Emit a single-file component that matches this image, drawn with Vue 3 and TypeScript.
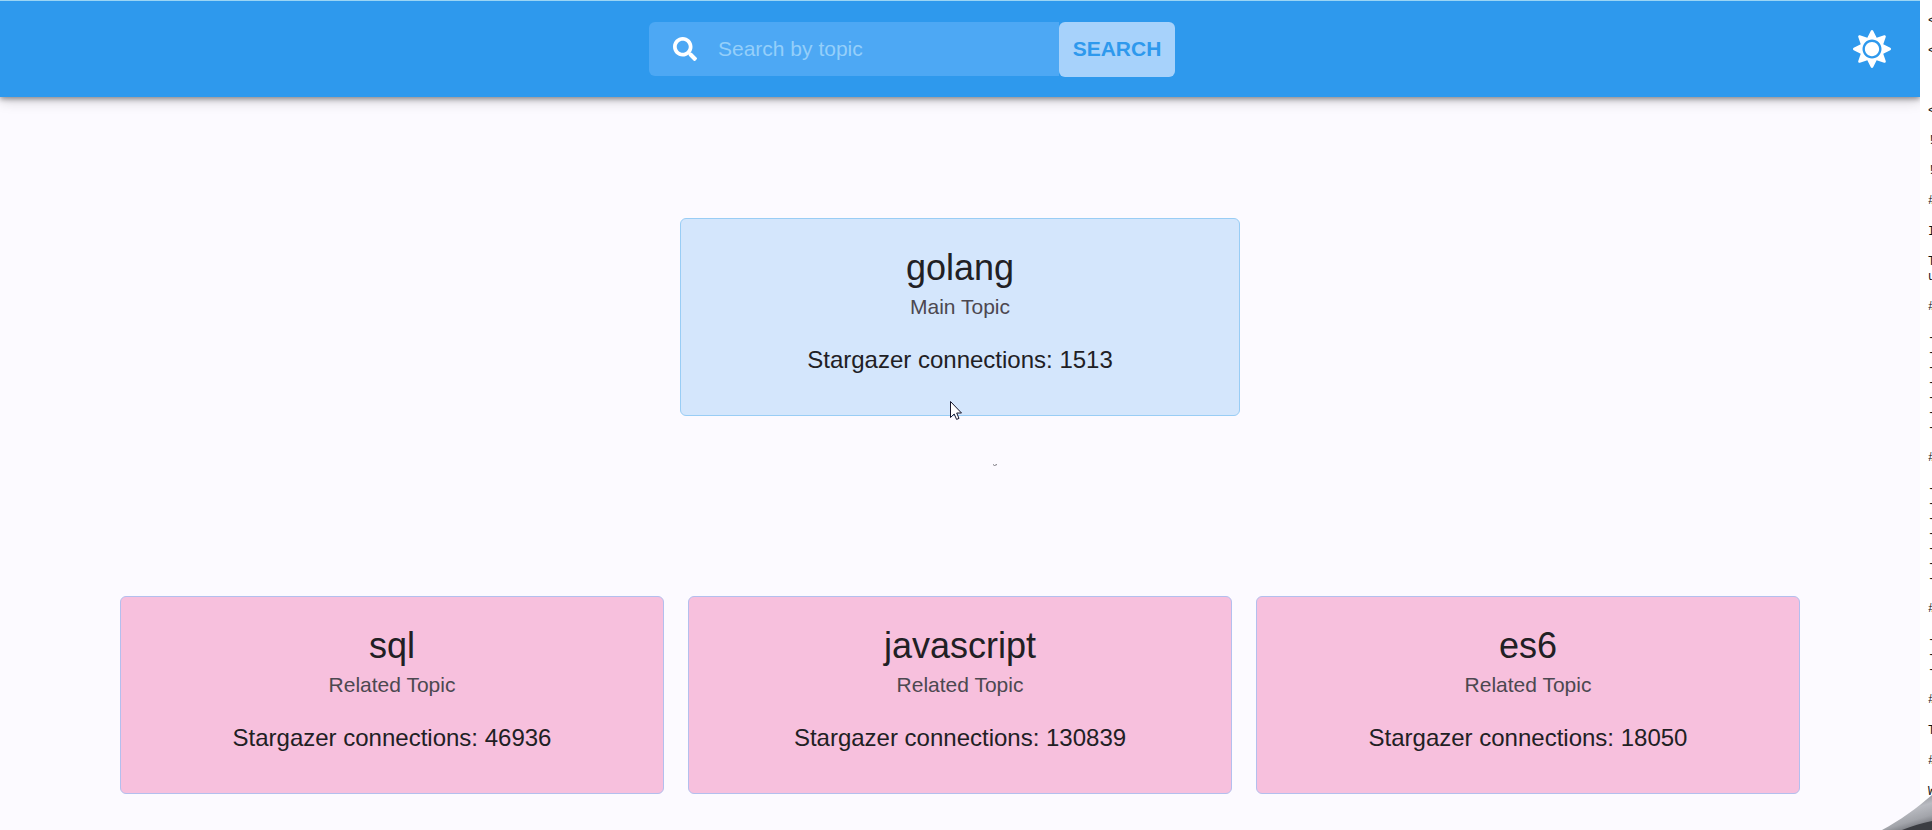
<script setup lang="ts">
import { ref } from 'vue'

interface Topic {
  name: string
  kind: string
  connections: number
}

const query = ref('')
const mainTopic: Topic = { name: 'golang', kind: 'Main Topic', connections: 1513 }
const relatedTopics: Topic[] = [
  { name: 'sql', kind: 'Related Topic', connections: 46936 },
  { name: 'javascript', kind: 'Related Topic', connections: 130839 },
  { name: 'es6', kind: 'Related Topic', connections: 18050 },
]

// First column of the text window that sits behind the app; '' is a blank line.
const notes: string[] = [
  '<', '', '<', '', '', '', '<', '', '!', '', '!', '', '#', '', 'I', '', 'T', 'u', '', '#', '',
  '-', '-', '-', '-', '-', '-', '-', '', '#', '',
  '-', '-', '-', '-', '-', '-', '-', '', '#', '',
  '-', '-', '-', '', '#', '', 'T', '', '#', '', 'W',
]
</script>

<template>
  <div class="desktop">
    <div class="app">
      <header class="bar">
        <form class="search" @submit.prevent>
          <label class="field">
            <svg class="search-icon" viewBox="0 0 512 512" role="img" aria-label="Topic">
              <path d="M505 442.7L405.3 343c-4.5-4.5-10.6-7-17-7H372c27.6-35.3 44-79.7 44-128C416 93.1 322.9 0 208 0S0 93.1 0 208s93.1 208 208 208c48.3 0 92.7-16.4 128-44v16.3c0 6.4 2.5 12.5 7 17l99.7 99.7c9.4 9.4 24.6 9.4 33.9 0l28.3-28.3c9.4-9.4 9.4-24.6.1-34zM208 336c-70.7 0-128-57.2-128-128 0-70.7 57.2-128 128-128 70.7 0 128 57.2 128 128 0 70.7-57.2 128-128 128z" />
            </svg>
            <input v-model="query" class="query" type="text" placeholder="Search by topic" />
          </label>
          <button class="submit" type="submit">SEARCH</button>
        </form>
        <button class="theme" type="button" aria-label="Toggle theme">
          <svg viewBox="0 0 512 512" aria-hidden="true">
            <path d="M256 160c-52.9 0-96 43.1-96 96s43.1 96 96 96 96-43.1 96-96-43.1-96-96-96zm246.4 80.5l-94.7-47.3 33.5-100.4c4.5-13.6-8.4-26.5-21.9-21.9l-100.4 33.5-47.4-94.8c-6.4-12.8-24.6-12.8-31 0l-47.3 94.7L92.7 70.8c-13.6-4.5-26.5 8.4-21.9 21.9l33.5 100.4-94.7 47.4c-12.8 6.4-12.8 24.6 0 31l94.7 47.3-33.5 100.5c-4.5 13.6 8.4 26.5 21.9 21.9l100.4-33.5 47.3 94.7c6.4 12.8 24.6 12.8 31 0l47.3-94.7 100.4 33.5c13.6 4.5 26.5-8.4 21.9-21.9l-33.5-100.4 94.7-47.3c13-6.5 13-24.7.2-31.1zm-155.9 106c-49.9 49.9-131.1 49.9-181 0-49.9-49.9-49.9-131.1 0-181 49.9-49.9 131.1-49.9 181 0 49.9 49.9 49.9 131.1 0 181z" />
          </svg>
        </button>
      </header>

      <main class="topics">
        <article class="card main-card">
          <h1 class="name">{{ mainTopic.name }}</h1>
          <p class="kind">{{ mainTopic.kind }}</p>
          <p class="count">Stargazer connections: {{ mainTopic.connections }}</p>
          <svg class="pointer" viewBox="0 0 12 19" aria-hidden="true">
            <path d="M.5 .5V16.5L4.2 13L6.6 18.4L9 17.4L6.7 12H11.5Z" />
          </svg>
          <svg class="speck" viewBox="0 0 4 2" aria-hidden="true">
            <path d="M0 .5L1.5 1.5L4 .5" />
          </svg>
        </article>
        <section class="related" aria-label="Related topics">
          <article v-for="topic in relatedTopics" :key="topic.name" class="card">
            <h2 class="name">{{ topic.name }}</h2>
            <p class="kind">{{ topic.kind }}</p>
            <p class="count">Stargazer connections: {{ topic.connections }}</p>
          </article>
        </section>
      </main>
    </div>

    <aside class="notes">
      <div v-for="(line, i) in notes" :key="i" class="line" :class="{ heading: line === '#' }">{{ line }}</div>
    </aside>

    <svg class="curl" viewBox="0 0 50 36" aria-hidden="true">
      <defs>
        <linearGradient id="curl-fill" x1="0.3" y1="0.2" x2="0.65" y2="1">
          <stop offset="0" stop-color="#8f9197" />
          <stop offset="0.35" stop-color="#b9bbc1" />
          <stop offset="0.7" stop-color="#a2a4aa" />
          <stop offset="1" stop-color="#6e7076" />
        </linearGradient>
      </defs>
      <path d="M0 36C17 27 35 14 50 1V36Z" fill="url(#curl-fill)" />
      <path d="M20 36C30 32 40 29 50 27V36Z" fill="#3b3d42" />
    </svg>
  </div>
</template>

<style>
body {
  background: #fff;
}
</style>

<style scoped>
.desktop {
  position: relative;
  display: grid;
  grid-template-columns: minmax(0, 1fr) 12px;
  min-height: 100vh;
  overflow: hidden;
  font-family: "Liberation Sans", Arial, sans-serif;
}

.app {
  background: #fcfaff;
}

.bar {
  display: grid;
  grid-template-columns: 1fr auto 1fr;
  align-items: start;
  box-sizing: border-box;
  height: 97px;
  padding: 21px 24px 0;
  border-top: 1px solid #9bd5f4;
  background: #2e99ed;
  box-shadow: 0 2px 5px rgba(0, 0, 0, 0.36), 0 4px 12px rgba(0, 0, 0, 0.18);
}

.search {
  grid-column: 2;
  display: flex;
  align-items: flex-start;
  margin-right: 96px;
}

.field {
  display: flex;
  align-items: center;
  box-sizing: border-box;
  width: 410px;
  height: 54px;
  padding-left: 24px;
  gap: 21px;
  border-radius: 6px 0 0 6px;
  background: #4da8f4;
}

.search-icon {
  flex: none;
  width: 24px;
  height: 24px;
  fill: #fff;
}

.query {
  flex: 1;
  min-width: 0;
  padding: 0;
  border: 0;
  outline: 0;
  background: transparent;
  color: #fff;
  font: 21px/30px "Liberation Sans", Arial, sans-serif;
}

.query::placeholder {
  color: #94cffa;
  opacity: 1;
}

.submit {
  width: 116px;
  height: 55px;
  padding: 0 0 2px;
  border: 0;
  border-radius: 6px;
  background: #a7d2fb;
  color: #2e99ed;
  font: bold 21px/36px "Liberation Sans", Arial, sans-serif;
}

.theme {
  grid-column: 3;
  justify-self: end;
  display: flex;
  margin: 8px 5px 0 0;
  padding: 0;
  border: 0;
  background: none;
}

.theme svg {
  width: 38px;
  height: 38px;
  fill: #fff;
}

.topics {
  display: flex;
  flex-direction: column;
  align-items: center;
  gap: 180px;
  padding: 121px 120px 36px;
}

.card {
  position: relative;
  box-sizing: border-box;
  padding: 25px 24px 37px;
  border: 1px solid #b3bfee;
  border-radius: 6px;
  background: #f7c0dd;
  color: #212024;
  text-align: center;
}

.main-card {
  width: 560px;
  border-color: #99cdf5;
  background: #d4e6fc;
}

.related {
  display: grid;
  grid-template-columns: repeat(3, minmax(0, 1fr));
  gap: 24px;
  width: 100%;
}

.name {
  margin: 0;
  font-size: 36px;
  font-weight: 400;
  line-height: 48px;
}

.kind {
  margin: 0 0 20px;
  color: #4c4850;
  font-size: 21px;
  line-height: 30px;
}

.count {
  margin: 0;
  font-size: 24px;
  line-height: 36px;
}

.pointer {
  position: absolute;
  left: 269px;
  top: 182px;
  width: 12px;
  height: 19px;
  fill: #fff;
  stroke: #15152b;
}

.speck {
  position: absolute;
  left: 312px;
  top: 245px;
  width: 4px;
  height: 2px;
  fill: none;
  stroke: #77757c;
}

.notes {
  min-width: 0;
  overflow: hidden;
  padding: 14px 0 0 8px;
  background: #fff;
  color: #111;
  font: 12px/15px "Liberation Mono", "Courier New", monospace;
}

.line {
  height: 15px;
}

.heading {
  height: 16px;
}

.curl {
  position: absolute;
  right: 0;
  bottom: 0;
  width: 50px;
  height: 36px;
}
</style>
